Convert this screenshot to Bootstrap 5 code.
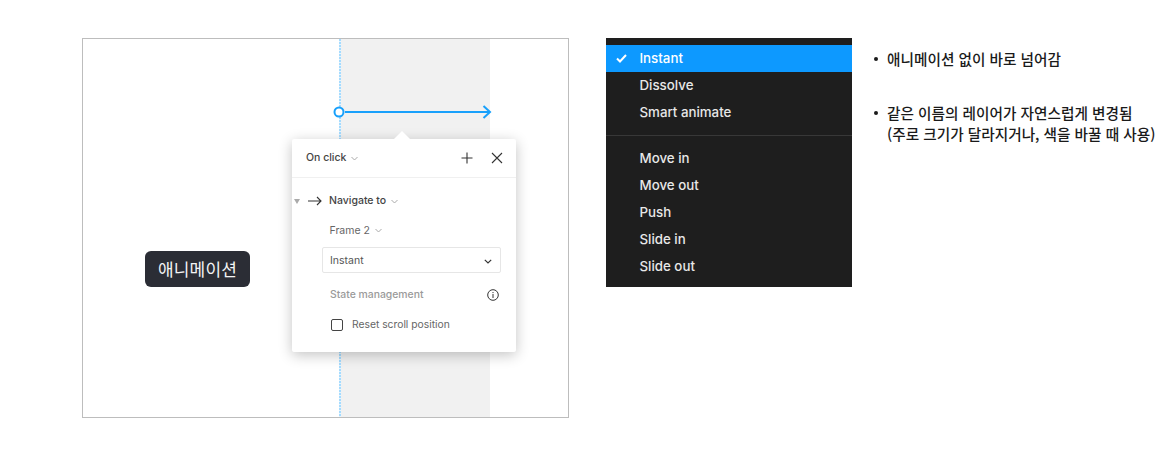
<!DOCTYPE html>
<html lang="ko">
<head>
<meta charset="utf-8">
<title>애니메이션</title>
<link href="https://cdn.jsdelivr.net/npm/bootstrap@5.3.0/dist/css/bootstrap.min.css" rel="stylesheet">
<style>
html,body{height:456px;overflow:hidden;background:#fff}
body{font-family:Inter,"Noto Sans CJK KR",sans-serif;color:#222}
.stage{padding:38px 0 0 82px;height:456px}
.canvas-frame{position:relative;width:487px;height:380px;border:1px solid #bdbdbd;background:#fff;flex:none}
.band{position:absolute;left:257px;top:0;width:150px;height:378px;background:#f1f1f1}
.vline{position:absolute;left:256px;top:0;width:2px;height:378px;background:repeating-linear-gradient(to bottom,#a5dbfe 0 2px,#e6f5ff 2px 3px)}
.wire{position:absolute;left:250px;top:65px}
.tag{position:absolute;left:62px;top:212px;width:105px;height:36px;border-radius:6px;background:#2b2d35;color:#f4f4f4;font:400 17px/36px "Noto Sans CJK KR",sans-serif;text-align:center;letter-spacing:.2px}
.pop{position:absolute;left:209px;top:100px;width:224px;height:213px;background:#fff;border-radius:2px;box-shadow:0 3px 14px rgba(0,0,0,.24);font-size:10.5px;color:#444}
.pop::before{content:"";position:absolute;left:102px;top:-8px;border:8px solid transparent;border-top:0;border-bottom-color:#fff}
.pop-head{height:39px;padding:0 13px 0 14px;border-bottom:1px solid #f0f0f0}
.pop-title{font-size:10.5px;color:#444;font-weight:500}
.chev{margin-left:5px;flex:none}
.close-x{margin-left:18px}
.row-nav{height:46px;padding-left:2px;color:#444;font-weight:500}
.row-nav svg.tri{margin-right:8px}
.row-nav svg.arr{margin-right:7px}
.row-frame{height:13px;margin:0 0 0 37.5px;line-height:13px;color:#666}
.sel-box{margin:10px 15px 0 30px;height:26px;border:1px solid #e6e6e6;border-radius:2px;padding:2px 8px 0 7px;color:#555}
.row-state{margin:14px 17px 0 38px;height:16px;color:#9a9a9a;font-weight:500;font-size:10.4px}
.row-check{margin:14px 0 0 39px;height:16px;color:#666;font-size:10.3px}
.box{width:12px;height:12px;border:1.3px solid #444;border-radius:2px;margin-right:9px;flex:none}
.menu-dark{width:246px;height:249px;margin-left:37px;background:#1e1e1e;color:#e8e8e8;font-size:13.3px;font-weight:500;padding-top:7px;flex:none}
.mi{height:27px;line-height:27px;padding-left:33.5px;position:relative}
.mi.on{background:#0d99ff;color:#fff}
.mi svg{position:absolute;left:10px;top:9px}
.sep{height:1px;background:#383838;margin:9px 0 9px}
.notes{margin:10px 0 0 19px;padding:0;list-style:none;font:500 14.65px/21px "Noto Sans CJK KR",sans-serif;color:#1a1a1a;white-space:nowrap;flex:none}
.notes li{display:flex;margin-bottom:33px}
.notes li::before{content:"";flex:none;width:4px;height:4px;border-radius:50%;background:#1a1a1a;margin:9px 9px 0 3px}
</style>
</head>
<body>
<div class="stage d-flex align-items-start">
  <div class="canvas-frame">
    <div class="band"></div>
    <div class="vline"></div>
    <svg class="wire" width="162" height="16" viewBox="0 0 162 16" fill="none" stroke="#18a0fb" stroke-width="2">
      <path d="M12 8H156.5"/><path d="M150.5 2l6.5 6-6.5 6"/>
      <circle cx="6" cy="8" r="4.5" fill="#fff"/>
    </svg>
    <div class="tag">애니메이션</div>
    <div class="pop">
      <div class="pop-head d-flex align-items-center">
        <span class="pop-title">On click</span>
        <svg class="chev" width="7" height="5" viewBox="0 0 7 5" fill="none" stroke="#aaa"><path d="M.5 1l3 3 3-3"/></svg>
        <svg class="ms-auto" width="12" height="12" viewBox="0 0 12 12" stroke="#333" stroke-width="1.1"><path d="M6 .5v11M.5 6h11"/></svg>
        <svg class="close-x" width="12" height="12" viewBox="0 0 12 12" stroke="#333" stroke-width="1.1"><path d="M1 1l10 10M11 1L1 11"/></svg>
      </div>
      <div class="row-nav d-flex align-items-center">
        <svg class="tri" width="6" height="5" viewBox="0 0 6 5"><path d="M0 0h6L3 5z" fill="#aaa"/></svg>
        <svg class="arr" width="14" height="10" viewBox="0 0 14 10" fill="none" stroke="#333" stroke-width="1.1"><path d="M0 5h13M9 1l4 4-4 4"/></svg>
        <span>Navigate to</span>
        <svg class="chev" width="7" height="5" viewBox="0 0 7 5" fill="none" stroke="#aaa"><path d="M.5 1l3 3 3-3"/></svg>
      </div>
      <div class="row-frame d-flex align-items-center">
        <span>Frame 2</span>
        <svg class="chev" width="7" height="5" viewBox="0 0 7 5" fill="none" stroke="#aaa"><path d="M.5 1l3 3 3-3"/></svg>
      </div>
      <div class="sel-box d-flex align-items-center justify-content-between">
        <span>Instant</span>
        <svg width="8" height="5" viewBox="0 0 8 5" fill="none" stroke="#333" stroke-width="1.2"><path d="M.8 .8L4 4 7.2 .8"/></svg>
      </div>
      <div class="row-state d-flex align-items-center justify-content-between">
        <span>State management</span>
        <svg width="12" height="12" viewBox="0 0 12 12" fill="none" stroke="#333"><circle cx="6" cy="6" r="5.3"/><path d="M6 5v4M6 3v1.1"/></svg>
      </div>
      <div class="row-check d-flex align-items-center">
        <span class="box"></span><span>Reset scroll position</span>
      </div>
    </div>
  </div>
  <div class="menu-dark">
    <div class="mi on"><svg width="11" height="9" viewBox="0 0 11 9" fill="none" stroke="#fff" stroke-width="2"><path d="M1 4.5L4 7.5 10 1"/></svg>Instant</div>
    <div class="mi">Dissolve</div>
    <div class="mi">Smart animate</div>
    <div class="sep"></div>
    <div class="mi">Move in</div>
    <div class="mi">Move out</div>
    <div class="mi">Push</div>
    <div class="mi">Slide in</div>
    <div class="mi">Slide out</div>
  </div>
  <ul class="notes">
    <li>애니메이션 없이 바로 넘어감</li>
    <li><span>같은 이름의 레이어가 자연스럽게 변경됨<br>(주로 크기가 달라지거나, 색을 바꿀 때 사용)</span></li>
  </ul>
</div>
<script src="https://cdn.jsdelivr.net/npm/bootstrap@5.3.0/dist/js/bootstrap.bundle.min.js"></script>
</body>
</html>
